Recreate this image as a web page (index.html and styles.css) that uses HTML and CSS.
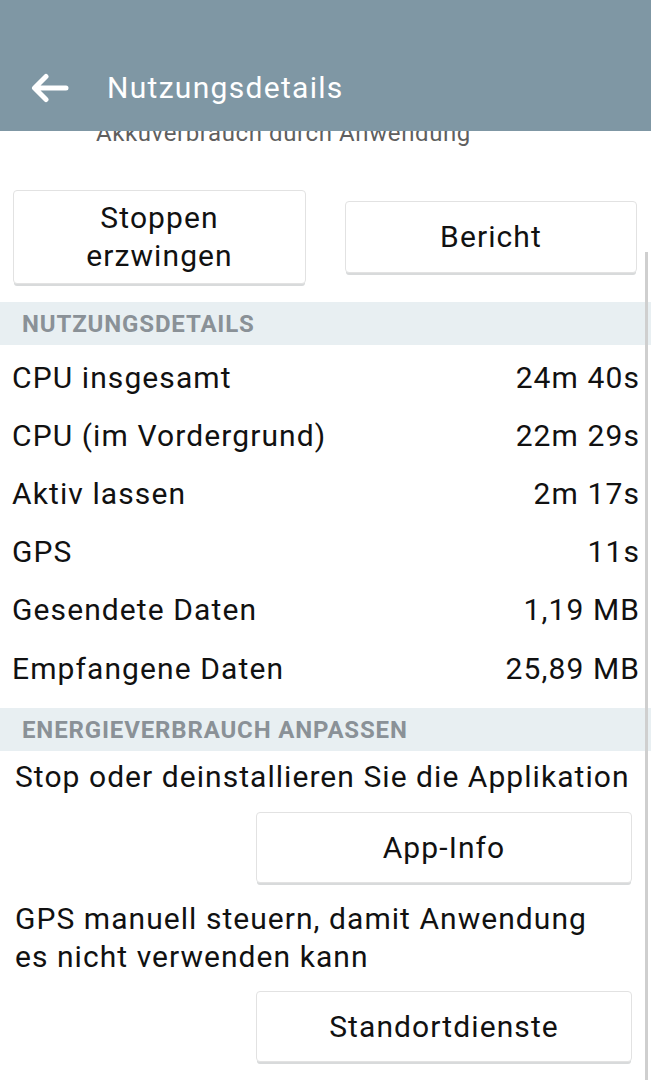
FILE: index.html
```html
<!DOCTYPE html>
<html lang="de">
<head>
<meta charset="utf-8">
<title>Nutzungsdetails</title>
<link rel="stylesheet" href="styles.css">
</head>
<body>
<div class="screen">
  <header class="appbar">
    <div class="toolbar">
      <svg class="back" width="38" height="30" viewBox="0 0 38 30" aria-hidden="true">
        <path d="M35 15 H4 M15 3.5 L3.5 15 L15 26.5" fill="none" stroke="#fff" stroke-width="5" stroke-linecap="round" stroke-linejoin="round"/>
      </svg>
      <h1 class="title">Nutzungsdetails</h1>
    </div>
  </header>

  <div class="clipped"><span>Akkuverbrauch durch Anwendung</span></div>

  <div class="actions">
    <button class="btn btn-tall">Stoppen<br>erzwingen</button>
    <button class="btn btn-short">Bericht</button>
  </div>

  <div class="section-head">NUTZUNGSDETAILS</div>
  <ul class="stats">
    <li class="row"><span>CPU insgesamt</span><span>24m 40s</span></li>
    <li class="row"><span>CPU (im Vordergrund)</span><span>22m 29s</span></li>
    <li class="row"><span>Aktiv lassen</span><span>2m 17s</span></li>
    <li class="row"><span>GPS</span><span>11s</span></li>
    <li class="row"><span>Gesendete Daten</span><span>1,19 MB</span></li>
    <li class="row"><span>Empfangene Daten</span><span>25,89 MB</span></li>
  </ul>

  <div class="section-head">ENERGIEVERBRAUCH ANPASSEN</div>
  <div class="adjust">
    <p class="desc one">Stop oder deinstallieren Sie die Applikation</p>
    <div class="btn-line first"><button class="btn btn-wide">App-Info</button></div>
    <p class="desc two">GPS manuell steuern, damit Anwendung<br>es nicht verwenden kann</p>
    <div class="btn-line second"><button class="btn btn-wide">Standortdienste</button></div>
  </div>

  <div class="scrollbar"></div>
</div>
</body>
</html>
```

FILE: styles.css
```css
* { box-sizing: border-box; }
html, body { margin: 0; padding: 0; background: #fff; }
body {
  font-family: Roboto, "Noto Sans", "Liberation Sans", sans-serif;
  color: #111;
  width: 651px;
  height: 1080px;
  overflow: hidden;
}
.screen { position: relative; width: 651px; height: 1080px; overflow: hidden; }

.appbar {
  height: 131px;
  background: #7f97a4;
  padding-top: 44px;
}
.toolbar {
  height: 87px;
  display: flex;
  align-items: center;
  padding-left: 31px;
}
.back { display: block; margin-right: 38px; }
.title {
  margin: 0;
  font-weight: 400;
  font-size: 30px;
  color: #fff;
  letter-spacing: 1.3px;
}

.clipped {
  height: 16px;
  overflow: hidden;
  display: flex;
  align-items: flex-end;
  padding-left: 96px;
}
.clipped span {
  font-size: 24px;
  line-height: 28px;
  color: #5f5f5f;
  white-space: nowrap;
  letter-spacing: 0.6px;
}

.actions {
  display: flex;
  align-items: center;
  justify-content: space-between;
  padding: 0 14px 0 13px;
  margin-top: 41px;
  height: 97px;
}
.btn {
  font-family: inherit;
  font-size: 30px;
  letter-spacing: 1.1px;
  color: #111;
  background: #fff;
  border: 1px solid #e2e2e2;
  border-radius: 4px;
  box-shadow: 0 3px 0 -1px #d8dadb;
  padding: 0;
  cursor: pointer;
}
.btn-tall { width: 293px; height: 94px; line-height: 38px; }
.btn-short { width: 292px; height: 72px; }

.section-head {
  height: 43px;
  background: #e8eff2;
  color: #8a9197;
  font-weight: 700;
  font-size: 24px;
  letter-spacing: 0.85px;
  padding-left: 22px;
  display: flex;
  align-items: center;
}
.actions + .section-head { margin-top: 17px; }

.stats {
  list-style: none;
  margin: 0;
  padding: 3px 12px 11px 12px;
}
.row {
  display: flex;
  justify-content: space-between;
  align-items: center;
  height: 58.2px;
  font-size: 30px;
  letter-spacing: 1.1px;
}
.row span:last-child { margin-right: -1px; }

.adjust { padding: 0 0 0 15px; }
.desc {
  margin: 0;
  font-size: 30px;
  line-height: 38px;
  letter-spacing: 1.05px;
}
.desc.one { padding-top: 7px; }
.desc.two { padding-top: 17px; }
.btn-line {
  display: flex;
  justify-content: flex-end;
  padding-right: 19px;
}
.btn-line.first { margin-top: 16px; }
.btn-line.second { margin-top: 15px; }
.btn-wide { width: 376px; height: 71px; }

.scrollbar {
  position: absolute;
  left: 645px;
  top: 252px;
  width: 3px;
  height: 828px;
  background: #cfcfcf;
}
```
